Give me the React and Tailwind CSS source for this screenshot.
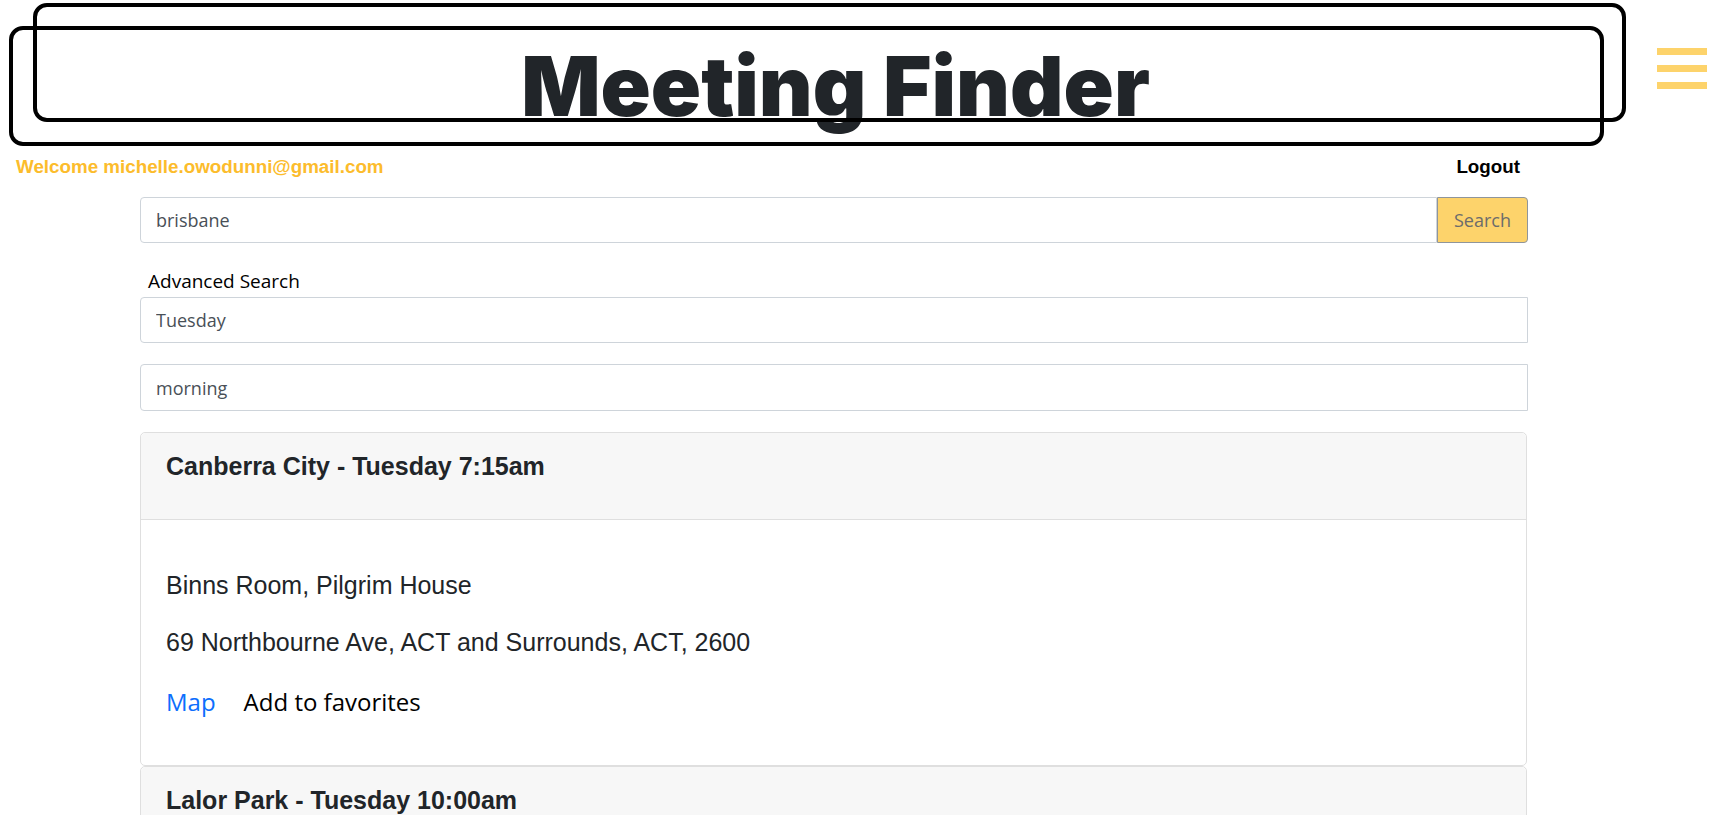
import React from "react";

const meetings = [
  {
    title: "Canberra City - Tuesday 7:15am",
    place: "Binns Room, Pilgrim House",
    address: "69 Northbourne Ave, ACT and Surrounds, ACT, 2600",
  },
  {
    title: "Lalor Park - Tuesday 10:00am",
    place: "Lalor Park Community Centre",
    address: "Freeman St, Lalor Park, NSW, 2147",
  },
];

function MeetingCard({ meeting }) {
  return (
    <div className="rounded-[5px] border border-[#dfdfdf] bg-white">
      {/* Card header */}
      <div className="rounded-t-[5px] border-b border-[#dfdfdf] bg-[#f7f7f7] px-[25px] pb-[39px] pt-[19px]">
        <h5 className="font-['Liberation_Sans',Arial,sans-serif] text-[25px] font-bold leading-[28px] text-[#212529]">
          {meeting.title}
        </h5>
      </div>

      {/* Card body */}
      <div className="px-[25px] pb-[48px] pt-[51px] font-['Liberation_Sans',Arial,sans-serif] text-[25px] leading-[28px] text-[#212529]">
        <p>{meeting.place}</p>
        <p className="mt-[29px]">{meeting.address}</p>
        <div className="mt-[31px] flex items-center gap-[28px] font-['Open_Sans',sans-serif] text-[24px] leading-[30px]">
          <a href="#" className="text-[#0d6efd]">
            Map
          </a>
          <span className="text-black">Add to favorites</span>
        </div>
      </div>
    </div>
  );
}

export default function App() {
  return (
    <div className="min-h-screen bg-white">
      {/* Header */}
      <header className="relative flex h-[156px] items-start">
        <svg
          className="pointer-events-none absolute left-0 top-0"
          width="1714"
          height="150"
          fill="none"
          stroke="black"
          strokeWidth="4"
        >
          <rect x="35" y="5" width="1589" height="115" rx="12" />
          <rect x="11" y="28" width="1591" height="116" rx="12" />
        </svg>

        <div className="flex flex-1 justify-center pl-[14px] pt-[45px]">
          <h1 className="font-['Inter',sans-serif] text-[83px] font-black leading-none text-[#212529]">
            Meeting Finder
          </h1>
        </div>

        <button className="mr-[7px] mt-[48px] flex w-[50px] flex-col gap-[10px]">
          <span className="h-[7px] w-full bg-[#fdd36b]" />
          <span className="h-[7px] w-full bg-[#fdd36b]" />
          <span className="h-[7px] w-full bg-[#fdd36b]" />
        </button>
      </header>

      {/* Welcome row */}
      <div className="flex h-[22px] items-center justify-between pl-[16px] pr-[194px] font-['Liberation_Sans',Arial,sans-serif] text-[18.8px] font-bold leading-[22px]">
        <span className="text-[#fcbc2c]">Welcome michelle.owodunni@gmail.com</span>
        <a href="#" className="text-black">
          Logout
        </a>
      </div>

      <main className="ml-[140px] w-[1388px] font-['Open_Sans',sans-serif]">
        {/* Search */}
        <div className="mt-[19px] flex h-[46px]">
          <input
            defaultValue="brisbane"
            className="h-full flex-1 rounded-l-[4px] border border-[#ced4da] px-[15px] text-[18px] text-[#495057] outline-none"
          />
          <button className="h-full w-[91px] rounded-r-[4px] border border-[#8f959b] bg-[#fdd36b] text-[18px] text-[#6c6c6c]">
            Search
          </button>
        </div>

        {/* Advanced search */}
        <div className="ml-[8px] mt-[25px] text-[19px] leading-[26px] text-black">
          Advanced Search
        </div>
        <input
          defaultValue="Tuesday"
          className="mt-[3px] block h-[46px] w-full rounded-l-[4px] border border-[#ced4da] px-[15px] text-[18px] text-[#495057] outline-none"
        />
        <input
          defaultValue="morning"
          className="mt-[21px] block h-[47px] w-full rounded-l-[4px] border border-[#ced4da] px-[15px] text-[18px] text-[#495057] outline-none"
        />

        {/* Results */}
        <div className="mt-[21px] flex w-[1387px] flex-col">
          {meetings.map((m) => (
            <MeetingCard key={m.title} meeting={m} />
          ))}
        </div>
      </main>
    </div>
  );
}
